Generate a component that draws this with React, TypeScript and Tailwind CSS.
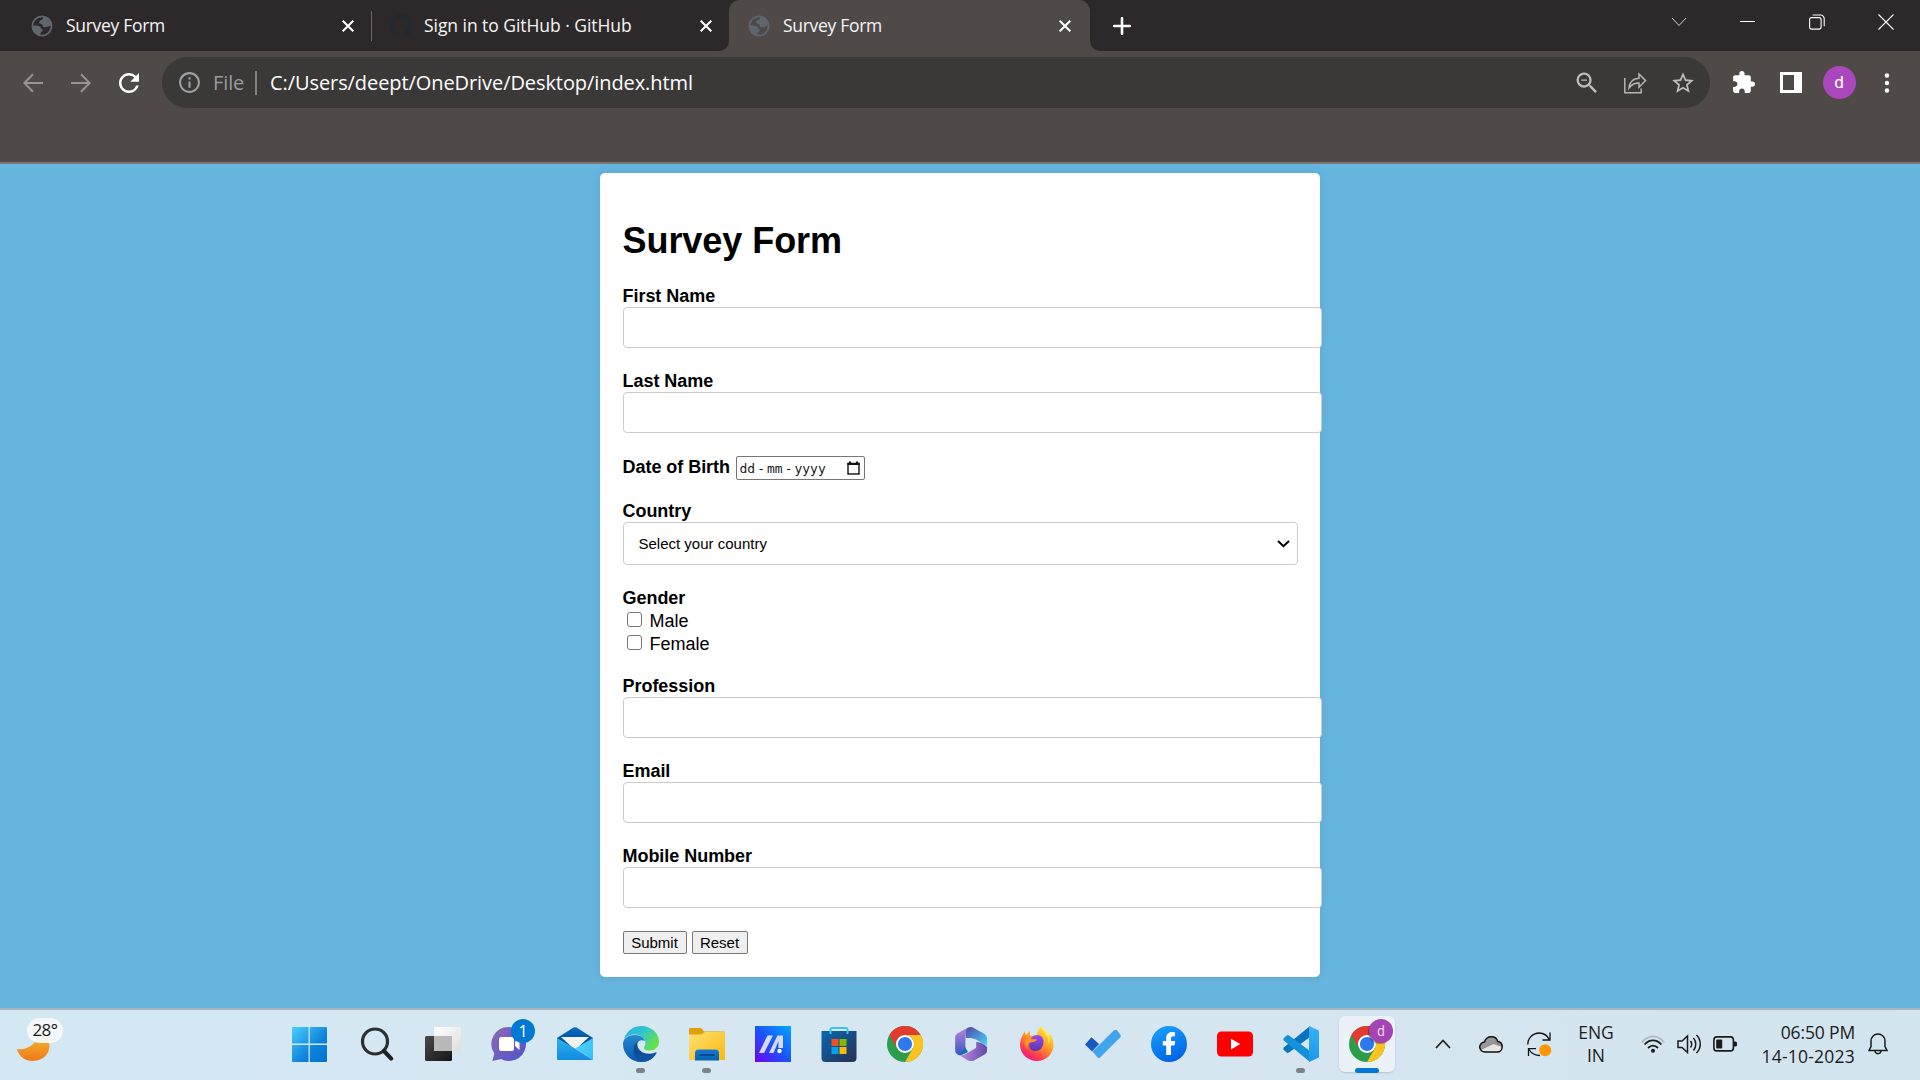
import type { ReactNode } from "react";
import { MdExtension, MdInfoOutline, MdRefresh, MdStarBorder, MdZoomOut } from "react-icons/md";
import { SiGithub } from "react-icons/si";

const UI = "font-['Segoe_UI','Open_Sans','Noto_Sans',sans-serif]";

function Globe() {
  return (
    <svg width="22" height="22" viewBox="0 0 22 22" fill="none">
      <circle cx="11" cy="11" r="9.6" stroke="#5f666d" strokeWidth="1.8" />
      <path
        d="M12.5 1.6C11 2.6 12.6 3.6 11.4 4.6 9.4 5.2 8 6.2 8.2 7.8c.3 1.5 2.6.8 3.1 1.8.4 1 .1 2.2 1.6 2.6 1.9.4 4.6-.6 6.6-1.4l1.1.2C20.800 5.800 17 1.600 12.500 1.600Z"
        fill="#5f666d"
      />
      <path
        d="M1.500 11c2.500-.6 5-.7 7 .2 1.500.8 1 2.300 2.600 3 1.300.8.2 2.200-.8 2.700-1.200.7-.4 2.300-1.500 3.100C4.500 19.200 1.500 15.500 1.500 11Z"
        fill="#5f666d"
      />
    </svg>
  );
}

function Close() {
  return (
    <svg width="12" height="12" viewBox="0 0 12 12" stroke="#fff" strokeWidth="2">
      <path d="M.7.7l10.600 10.600M11.300.7L.7 11.300" />
    </svg>
  );
}

function TabStrip() {
  return (
    <div className="flex h-[51px] bg-[#2d292a] text-[17.500px] text-[#f5f5f5]">
      <div className="flex h-[51px] w-[371px] items-center pl-[31px] pr-[17px]">
        <Globe />
        <span className="ml-[13px] flex-1 tracking-[-0.3px]">Survey Form</span>
        <Close />
      </div>
      <div className="mt-[11px] h-[30px] w-px bg-[#6b6566]" />
      <div className="flex h-[51px] w-[357px] items-center pl-[18px] pr-[17px]">
        <SiGithub size={23} color="#24292f" />
        <span className="ml-[11px] flex-1 tracking-[-0.05px]">Sign in to GitHub · GitHub</span>
        <Close />
      </div>
      <div className="relative flex h-[51px] w-[361px] items-center rounded-t-[11px] bg-[#4f4948] pl-[19px] pr-[19px]">
        <svg className="absolute -left-[10px] bottom-0" width="10" height="10">
          <path d="M10 0V10H0A10 10 0 0 0 10 0Z" fill="#4f4948" />
        </svg>
        <svg className="absolute -right-[10px] bottom-0" width="10" height="10">
          <path d="M0 0V10H10A10 10 0 0 1 0 0Z" fill="#4f4948" />
        </svg>
        <Globe />
        <span className="ml-[13px] flex-1 tracking-[-0.3px]">Survey Form</span>
        <Close />
      </div>
      <div className="flex h-[51px] w-[64px] items-center justify-center">
        <svg width="18" height="18" stroke="#fff" strokeWidth="2.600" strokeLinecap="round">
          <path d="M9 1.200V16.800M1.200 9H16.800" />
        </svg>
      </div>
      <div className="ml-auto flex h-[43px] items-center text-white">
        <div className="flex w-[68px] justify-center">
          <svg width="16" height="10" fill="none" stroke="#cfcece" strokeWidth="1">
            <path d="M1 1l7 7.500L15 1" />
          </svg>
        </div>
        <div className="flex w-[69px] justify-center">
          <div className="h-px w-[15px] bg-white" />
        </div>
        <div className="flex w-[69px] justify-center">
          <svg width="16" height="16" fill="none" stroke="currentColor" strokeWidth="1.100">
            <rect x=".6" y="3.600" width="11.500" height="11.500" rx="2" />
            <path d="M3.600 1h8a3.600 3.600 0 0 1 3.600 3.600v7.600" />
          </svg>
        </div>
        <div className="flex w-[69px] justify-center">
          <svg width="16" height="16" fill="none" stroke="currentColor" strokeWidth="1.100">
            <path d="M.5.5l15 15M15.500.5l-15 15" />
          </svg>
        </div>
      </div>
    </div>
  );
}

function Slot({ children }: { children: ReactNode }) {
  return <div className="flex w-12 items-center justify-center">{children}</div>;
}

function Toolbar() {
  return (
    <div className="flex h-[113px] border-b-2 border-[#7d7574] bg-[#4f4948] pt-[6px]">
      <div className="flex h-[51px] w-full items-center">
        <div className="flex pl-[9px]">
          <Slot>
            <svg width="20" height="20" fill="none" stroke="#989393" strokeWidth="2">
              <path d="M20 10H1.500M10 1.200L1.300 10l8.700 8.800" />
            </svg>
          </Slot>
          <Slot>
            <svg width="20" height="20" fill="none" stroke="#989393" strokeWidth="2">
              <path d="M0 10h18.500M10 1.200l8.700 8.800-8.700 8.800" />
            </svg>
          </Slot>
          <Slot>
            <MdRefresh size={30} color="#fff" />
          </Slot>
        </div>
        <div className="ml-[9px] flex h-[51px] w-[1548px] items-center rounded-full bg-[#3b3838] pl-[15px] pr-[3px]">
          <MdInfoOutline size={25} color="#9ba0a4" />
          <span className="ml-[11px] w-[42px] text-[20px] tracking-[-0.1px] text-[#989a9e]">File</span>
          <div className="h-6 w-[2px] bg-[#817f80]" />
          <span className="ml-[13px] flex-1 text-[20px] tracking-[-0.080px] text-white">
            C:/Users/deept/OneDrive/Desktop/index.html
          </span>
          <Slot>
            <MdZoomOut size={28} color="#bdbdbd" />
          </Slot>
          <Slot>
            <svg width="24" height="22" viewBox="0 0 24 22" fill="none" stroke="#b5b5b5" strokeWidth="1.500">
              <path d="M1.800 6v14.700h16.400v-4.200" />
              <path d="M6 16c.5-5.800 4-9.500 10-9.800V2l6.600 6.600-6.600 6.600v-4.200c-4.500-.1-7.400 1.500-10 5Z" />
            </svg>
          </Slot>
          <Slot>
            <MdStarBorder size={26} color="#bdbdbd" />
          </Slot>
        </div>
        <div className="ml-[9px] flex">
          <Slot>
            <MdExtension size={25} color="#fff" />
          </Slot>
          <Slot>
            <div className="flex h-[21px] w-[22px] justify-start bg-white py-[3px] pl-[3px]">
              <div className="h-[15px] w-[11px] bg-[#4f4948]" />
            </div>
          </Slot>
          <Slot>
            <div className="flex h-[33px] w-[33px] items-center justify-center rounded-full bg-[#ab47bc] font-[Roboto] text-[17px] text-white">
              d
            </div>
          </Slot>
          <Slot>
            <svg width="6" height="20" fill="#fff">
              <circle cx="3" cy="2.500" r="2.200" />
              <circle cx="3" cy="10" r="2.200" />
              <circle cx="3" cy="17.500" r="2.200" />
            </svg>
          </Slot>
        </div>
      </div>
    </div>
  );
}

function Label({ children }: { children: ReactNode }) {
  return <div className="h-[21px] text-[18px] font-bold leading-[20px] tracking-[-0.040px]">{children}</div>;
}

function Field({ label }: { label: string }) {
  return (
    <div className="mb-[23px]">
      <Label>{label}</Label>
      <input className="block h-[41px] w-[699px] rounded-[4px] border border-[#ccc] bg-white px-3" />
    </div>
  );
}

function Check({ label }: { label: string }) {
  return (
    <div className="flex h-[23px] pl-1">
      <div className="mt-[3px] h-[15px] w-[15px] rounded-[3px] border border-[#767676] bg-white" />
      <span className="ml-2 text-[18px] leading-[25px]">{label}</span>
    </div>
  );
}

function Page() {
  return (
    <div className="flex h-[844px] justify-center overflow-hidden bg-[#66b6e0] pt-[9px] font-['Liberation_Sans',Arial,sans-serif] text-black">
      <div className="h-[804px] w-[720px] rounded-[5px] bg-white pl-[22.500px] shadow-[0_0_11px_rgba(0,0,0,0.1)]">
        <h1 className="h-[113px] pt-[48px] text-[36px] font-bold leading-[40px] tracking-[-0.050px]">Survey Form</h1>
        <Field label="First Name" />
        <Field label="Last Name" />
        <div className="mb-[21px] flex h-6">
          <span className="w-[113px] text-[18px] font-bold leading-[23px] tracking-[-0.040px]">Date of Birth</span>
          <div className="flex h-6 w-[129px] items-center justify-between rounded-[2px] border border-[#767676] pl-[3px] pr-[4px]">
            <span className="flex gap-[3px] pt-px font-['DejaVu_Sans_Mono',monospace] text-[13px] text-[#1a1a1a]">
              <span>dd</span>
              <span className="-mx-px">-</span>
              <span>mm</span>
              <span className="-mx-px">-</span>
              <span>yyyy</span>
            </span>
            <svg width="13" height="14" fill="none" stroke="#111">
              <rect x="1" y="2.500" width="11" height="10.500" strokeWidth="1.400" />
              <path d="M.4 3h12.200M3 .4v2M10 .4v2" strokeWidth="2.200" />
            </svg>
          </div>
        </div>
        <Label>Country</Label>
        <div className="mb-[23px] flex h-[43px] w-[675px] items-center justify-between rounded-[4px] border border-[#ccc] pl-[15px] pr-[7px]">
          <span className="pt-[2px] text-[15px]">Select your country</span>
          <svg width="13" height="8" fill="none" stroke="#000" strokeWidth="2">
            <path d="M1 1l5.500 5.200L12 1" />
          </svg>
        </div>
        <Label>Gender</Label>
        <Check label="Male" />
        <Check label="Female" />
        <div className="h-[21px]" />
        <Field label="Profession" />
        <Field label="Email" />
        <Field label="Mobile Number" />
        <div className="flex gap-[5px] text-[15px]">
          <button className="h-[23px] w-16 rounded-[2px] border border-[#767676] bg-[#efefef] leading-[21px]">Submit</button>
          <button className="h-[23px] w-[56px] rounded-[2px] border border-[#767676] bg-[#efefef] leading-[21px]">Reset</button>
        </div>
      </div>
    </div>
  );
}

function Icon({ children }: { children: ReactNode }) {
  return (
    <svg width="36" height="36" viewBox="0 0 36 36" fill="none" className="overflow-visible">
      {children}
    </svg>
  );
}

function Cell({ children, running }: { children: ReactNode; running?: boolean }) {
  return (
    <div className="relative flex h-[68px] w-[66px] items-center justify-center">
      {children}
      {running && <div className="absolute left-[28px] top-[58px] h-[5px] w-[9px] rounded-full bg-[#7c8489]" />}
    </div>
  );
}

function ChromeLogo() {
  return (
    <Icon>
      <circle cx="18" cy="18" r="18" fill="#2c9e4b" />
      <path d="M2.400 9A18 18 0 0 1 33.600 9H18a9 9 0 0 0-7.800 13.500Z" fill="#e33b2e" />
      <path d="M33.600 9A18 18 0 0 1 18 36l7.800-13.500A9 9 0 0 0 18 9Z" fill="#fcc31e" />
      <circle cx="18" cy="18" r="9" fill="#fff" />
      <circle cx="18" cy="18" r="7.100" fill="#2f78ee" />
    </Icon>
  );
}

function Gradient({ id, from, to, x2 = 1, y2 = 1 }: { id: string; from: string; to: string; x2?: number; y2?: number }) {
  return (
    <linearGradient id={id} x1="0" y1="0" x2={x2} y2={y2}>
      <stop stopColor={from} />
      <stop offset="1" stopColor={to} />
    </linearGradient>
  );
}

function Gradients() {
  return (
    <svg width="0" height="0" className="absolute">
      <defs>
        <linearGradient id="win" gradientUnits="userSpaceOnUse" x1="0" y1="0" x2="36" y2="36">
          <stop stopColor="#4cd2ff" />
          <stop offset=".6" stopColor="#0f84dc" />
          <stop offset="1" stopColor="#0072d0" />
        </linearGradient>
        <Gradient id="moon" from="#f4c02f" to="#f07a1c" x2={0} />
        <Gradient id="dark" from="#4a4a4a" to="#151515" />
        <Gradient id="light" from="#ffffff" to="#dedede" />
        <Gradient id="chat" from="#9068b5" to="#4d55c8" />
        <Gradient id="mailTop" from="#0a6cc4" to="#03468f" x2={0} />
        <Gradient id="mail" from="#2cb2ee" to="#138be0" x2={0} />
        <Gradient id="mailFold" from="#50d6fa" to="#36bdf2" />
        <linearGradient id="edgeTop" x1="0" y1="0" x2="1" y2=".6">
          <stop stopColor="#2aaee8" />
          <stop offset=".5" stopColor="#30c5cf" />
          <stop offset="1" stopColor="#66e345" />
        </linearGradient>
        <Gradient id="edgeLeft" from="#2488cf" to="#0a58b0" x2={0} />
        <Gradient id="edgeDark" from="#114a8b" to="#0e56a8" />
        <Gradient id="folder" from="#ffe074" to="#fbb90d" />
        <Gradient id="folderBlue" from="#1579d2" to="#0763b0" x2={0} />
        <linearGradient id="asus" x1="0" y1="1" x2="1" y2="0">
          <stop stopColor="#6f00f6" />
          <stop offset=".5" stopColor="#1b55fa" />
          <stop offset="1" stopColor="#00a8ff" />
        </linearGradient>
        <Gradient id="store" from="#0868b4" to="#293052" />
        <Gradient id="m1" from="#5146a5" to="#46d5fb" />
        <Gradient id="m2" from="#bb83de" to="#3857c4" x2={0} />
        <Gradient id="m3" from="#c18ae8" to="#604ba5" x2={1} y2={0} />
        <linearGradient id="fox" x1=".8" y1="0" x2=".2" y2="1">
          <stop stopColor="#fff044" />
          <stop offset=".45" stopColor="#ff9a24" />
          <stop offset=".8" stopColor="#fb3359" />
          <stop offset="1" stopColor="#e01894" />
        </linearGradient>
        <Gradient id="foxBall" from="#9a4bf0" to="#5738a6" x2={0} />
        <Gradient id="fb" from="#17a6fa" to="#0565e8" x2={0.4} />
        <Gradient id="vs" from="#33b3f5" to="#1d98ea" x2={0} />
        <Gradient id="cloud" from="#a4a4a4" to="#828282" />
      </defs>
    </svg>
  );
}

function Apps() {
  return (
    <div className="ml-[215px] flex">
      <Cell>
        <svg width="40" height="36" viewBox="0 0 40 36">
          <path d="M1 2a1 1 0 0 1 1-1h15.500v16.500H1ZM18.800 1H35a1 1 0 0 1 1 1v15.500H18.800ZM1 19h16.500v17H2a1 1 0 0 1-1-1ZM18.800 19H36v16a1 1 0 0 1-1 1H18.800Z" fill="url(#win)" />
        </svg>
      </Cell>
      <Cell>
        <Icon>
          <circle cx="16" cy="15.500" r="12.500" stroke="#2d2e30" strokeWidth="3.200" />
          <path d="M25 25l7.200 7.600" stroke="#202122" strokeWidth="4.200" strokeLinecap="round" />
        </Icon>
      </Cell>
      <Cell>
        <Icon>
          <rect x="0" y="10" width="27" height="25" rx="1.500" fill="url(#dark)" />
          <rect x="9" y="1" width="27" height="24" rx="1.500" fill="url(#light)" />
          <path d="M9 10h18v15H9Z" fill="#b9b9b9" />
        </Icon>
      </Cell>
      <Cell>
        <Icon>
          <path d="M18 1a17 17 0 1 1-8 32L1.300 35l2-7.500A17 17 0 0 1 18 1Z" fill="url(#chat)" />
          <rect x="8" y="11" width="15" height="14" rx="2.500" fill="#fff" />
          <path d="M24 16l4.500-4v12L24 20Z" fill="#fff" />
          <circle cx="32" cy="5" r="12" fill="#0078d4" />
        </Icon>
        <span className="absolute left-[42px] top-[9px] w-[10px] text-center text-[16px] leading-[24px] text-white">1</span>
      </Cell>
      <Cell>
        <Icon>
          <path d="M0 12L16.500 1.600a3 3 0 0 1 3 0L36 12v8H0Z" fill="url(#mailTop)" />
          <path d="M4 11h28L18 24Z" fill="#f2f2f2" />
          <path d="M0 12l18 10.500L36 34H1a1 1 0 0 1-1-1Z" fill="url(#mail)" />
          <path d="M36 12v22L18 22.500Z" fill="url(#mailFold)" />
        </Icon>
      </Cell>
      <Cell running>
        <Icon>
          <path d="M1 13C4 4 11 0 18.500 0 28 0 36 7 36 15.500c0 6-4.500 9-9.500 9-4 0-5.500-1.500-5.500-2.800 0-1.200 1.500-2 1.500-4.700C22.500 12 17 8.500 12 8.500 7 8.500 3 10.500 1 13Z" fill="url(#edgeTop)" />
          <path d="M0 18C0 12 6 9 12 9c6 0 9 3 10 6-7-3-10 4-7 9 3.500 6 12 6 17.500 4C30 33 25 36 18 36 8 36 0 28 0 18Z" fill="url(#edgeLeft)" />
          <path d="M14.500 15.500C8 20 9 35 21 35.700c6-.8 10-4.200 12.500-8.500.3-.8-.3-1.200-1-.8C24 30 12.500 26 14.500 15.500Z" fill="url(#edgeDark)" />
        </Icon>
      </Cell>
      <Cell running>
        <Icon>
          <path d="M0 3a1 1 0 0 1 1-1h11l3 3.500h20a1 1 0 0 1 1 1V12H0Z" fill="#e0a009" />
          <path d="M0 8.500h12.500L16 6h19a1 1 0 0 1 1 1v27H0Z" fill="url(#folder)" />
          <path d="M6 34.500V27a3.500 3.500 0 0 1 3.500-3.500h17A3.500 3.500 0 0 1 30 27v7.500Z" fill="url(#folderBlue)" />
          <path d="M11 29h14" stroke="#044a87" strokeWidth="1.800" strokeLinecap="round" />
        </Icon>
      </Cell>
      <Cell>
        <Icon>
          <path d="M0 0h36v36H0Z" fill="url(#asus)" />
          <path d="M4 27L12.500 9.500h5.500L9 27ZM14 27L22.500 9.500H28V22h-4.500v-7L18.500 27Z" fill="#d5dcff" />
          <circle cx="24.500" cy="25" r="2.200" fill="#fff" />
        </Icon>
      </Cell>
      <Cell>
        <Icon>
          <path d="M.5 5h35v27a4 4 0 0 1-4 4h-27a4 4 0 0 1-4-4Z" fill="url(#store)" />
          <path d="M9.500 8V3.500a1.500 1.500 0 0 1 1.500-1.500h14a1.500 1.500 0 0 1 1.500 1.500V8" stroke="#3cc3f4" strokeWidth="2" />
          <path d="M10.500 13h7v7h-7Z" fill="#f25022" />
          <path d="M18.500 13h7v7h-7Z" fill="#7fba00" />
          <path d="M10.500 21h7v7h-7Z" fill="#00a4ef" />
          <path d="M18.500 21h7v7h-7Z" fill="#ffb900" />
        </Icon>
      </Cell>
      <Cell>
        <ChromeLogo />
      </Cell>
      <Cell>
        <Icon>
          <path d="M14 2L4 7.800Q2.200 9 2.200 11v14q0 2 1.800 3l3 1.600Q12 28 12.500 24V12Q12.500 5 18 1Z" fill="url(#m2)" />
          <path d="M13 12V6q0-5 6-5l12.500 7q2.500 1.500 2.500 4v8L23 13.500 18 12Z" fill="url(#m1)" />
          <path d="M34 17v8q0 2-2 3.200L21 34.500q-3 1-6 0L6 29q4 1 7-1.200L23 22V16Q29 16 34 21Z" fill="url(#m3)" />
          <path d="M4 28.500Q9 30 15 26l-3-5Q10 26 4 28.500Z" fill="#1770b8" />
          <path d="M18 12l5.200 3v6L18 24.300 12.800 21v-6Z" fill="#d7e7f1" />
        </Icon>
      </Cell>
      <Cell>
        <Icon>
          <path d="M1 19C1 13 3.500 9.500 5.500 5.500L7 9l4-4v5l7-1C18 5 20 2 23 0c1 5 4 5 7 10l1-2c2 3 3.500 7 3.500 11C34.500 28 27 35 18 35S1 28 1 19Z" fill="url(#fox)" />
          <path d="M18 9c5 0 7 4 6.500 8-.5 5-4 8-8.500 8-4 0-6-3-6-7 0-5 4-9 8-9Z" fill="url(#foxBall)" />
          <path d="M6 13c5-1.500 7 .5 12 .3-.5 3-5 2-8 4-2 1.500-2 4-1 6-3-2-4-6-3-10.300Z" fill="#ff9421" />
          <path d="M22 2c3 5 8 7 7 15 2-1 2-4 1.500-7C29 6 25 5 23 0Z" fill="#ffee45" />
        </Icon>
      </Cell>
      <Cell>
        <Icon>
          <path d="M0 18.500l6.500-7.300L14 18l-7 7.500Z" fill="#185abd" />
          <path d="M7.500 25.500L29 4.300q1.500-1.200 3 0l3.400 4.400q1 1.300 0 2.600L15 31.500q-1.200 1-2.400 0Z" fill="#41a5ee" />
        </Icon>
      </Cell>
      <Cell>
        <Icon>
          <circle cx="18" cy="18" r="18" fill="url(#fb)" />
          <path d="M15.200 29V19.500H11.800V15h3.400v-2.800C15.200 8.300 17.300 6 21 6c1.300 0 3 .3 3 .3v3.900h-1.800c-1.700 0-2.200 1-2.200 2.100V15h4.200l-.7 4.500H20V29Z" fill="#fff" />
        </Icon>
      </Cell>
      <Cell>
        <Icon>
          <rect x="0" y="5.500" width="36" height="25" rx="4.500" fill="#f00" />
          <path d="M14 12.800v10.600l9.300-5.300Z" fill="#fff" />
        </Icon>
      </Cell>
      <Cell running>
        <Icon>
          <path d="M27 0v11L6 26.500q-1.200.8-2.400 0L.8 24q-1.200-1.200 0-2.400Z" fill="#0b72bd" />
          <path d="M27 36V25L6 9.500q-1.200-.8-2.400 0L.8 12q-1.200 1.200 0 2.400Z" fill="#1391db" />
          <path d="M26 0l9 4q1 .6 1 1.800v24.400q0 1.200-1 1.800l-9 4Z" fill="url(#vs)" />
        </Icon>
      </Cell>
      <Cell>
        <div className="absolute left-[5px] top-[6px] h-[56px] w-[56px] rounded-[6px] bg-[#eaf2f8] shadow-[0_1px_2px_rgba(0,0,0,0.15)]" />
        <div className="relative">
          <ChromeLogo />
        </div>
        <div className="absolute left-[35px] top-[9px] h-6 w-6 rounded-full bg-[#a343b4] text-center font-[Roboto] text-[14px] leading-[24px] text-[#ecd0f0] shadow-[-1px_1px_1px_rgba(0,0,0,0.35)]">
          d
        </div>
        <div className="absolute left-[21px] top-[58px] h-[5px] w-6 rounded-full bg-[#0078d4]" />
      </Cell>
    </div>
  );
}

function Tray() {
  return (
    <div className="flex h-[68px] flex-1 items-center text-[#1b1b1b]">
      <svg className="ml-[35px]" width="16" height="10" fill="none" stroke="#222" strokeWidth="1.800">
        <path d="M1 9l7-7.500L15 9" />
      </svg>
      <svg className="ml-[28px]" width="24" height="17" viewBox="0 0 24 17">
        <path d="M6 16a5 5 0 0 1-.5-10C6.500 2.500 9.500.8 12.500.8c3 0 5.500 2 6.200 4.600 2.700.3 4.500 2.500 4.500 5 0 3.200-2 5.600-5 5.600Z" fill="url(#cloud)" />
        <path d="M2 14L14.500 8l8.500 3c0 3-2 5-4.800 5H6C4 16 3 15.500 2 14Z" fill="#e6e6e6" />
        <path d="M6 16a5 5 0 0 1-.5-10C6.500 2.500 9.500.8 12.500.8c3 0 5.500 2 6.200 4.600 2.700.3 4.500 2.500 4.500 5 0 3.200-2 5.600-5 5.600Z" fill="none" stroke="#111" strokeWidth="1.500" />
      </svg>
      <svg className="ml-[24px]" width="25" height="25" fill="none" stroke="#151515" strokeWidth="1.300">
        <path d="M.8 12.500C.8 6 6 1 12 1c4.500 0 8.500 2.500 10.500 7M23 .5V8h-7.500M1.500 24v-7.300H9M2 17.500c2.500 4 6 6 11 6" />
        <circle cx="18.200" cy="18.300" r="6" fill="#ff9800" stroke="none" />
      </svg>
      <div className="ml-[23px] w-[42px] text-center text-[17.500px] leading-[23px]">
        ENG
        <br />
        IN
      </div>
      <svg className="ml-[24px]" width="24" height="18" fill="none" strokeWidth="1.800">
        <path d="M.8 7.500C7 -.8 17-.8 23.200 7.500" stroke="#a9b7c0" />
        <path d="M3.600 9.500c4.700-5.500 12-5.500 16.800 0M7 13c3-3 7-3 10 0" stroke="#1b1b1b" />
        <circle cx="12" cy="15.800" r="2" fill="#1b1b1b" />
      </svg>
      <svg className="ml-[12px]" width="25" height="20" fill="none" stroke="#1b1b1b" strokeWidth="1.500">
        <path d="M1 7v6.500h4l5.500 5V2L5 7ZM13.500 7c1.500 2 1.500 4.500 0 6.500M16.500 4c3 3.500 3 9 0 12.500M19.500 1c5 5 5 13 0 18" />
      </svg>
      <svg className="ml-[11px]" width="24" height="16" fill="none">
        <rect x=".9" y=".9" width="19.500" height="14" rx="3" stroke="#1b1b1b" strokeWidth="1.600" />
        <rect x="3.200" y="3.400" width="6" height="9" rx="1" fill="#1b1b1b" />
        <path d="M21 5.500h1.500a1.500 1.500 0 0 1 1.500 1.500v2a1.500 1.500 0 0 1-1.500 1.500H21Z" fill="#1b1b1b" />
      </svg>
      <div className="ml-auto text-right text-[17.500px] leading-[24px]">
        <span className="tracking-[-0.150px]">06:50 PM</span>
        <br />
        <span className="tracking-[0.220px]">14-10-2023</span>
      </div>
      <svg className="ml-[13px] mr-[32px]" width="20" height="22" fill="none" stroke="#1b1b1b" strokeWidth="1.500">
        <path d="M1 17.500l2-4V8a7 7 0 0 1 14 0v5.500l2 4ZM7 18c.5 3.500 5.500 3.500 6 0" />
      </svg>
    </div>
  );
}

function Taskbar() {
  return (
    <div className="flex h-[72px] border-t-2 border-[#a9b5be] bg-linear-to-r from-[#d3e8f3] via-[#d7e7f1] to-[#d2e4ee]">
      <Gradients />
      <div className="relative h-[68px] w-[63px]">
        <svg className="absolute left-[16px] top-[20px]" width="35" height="32">
          <path d="M.7 19C11 21 21 14 24.500 1.500 38 7 37 31 16.500 31 9 31 3.500 27 .7 19Z" fill="url(#moon)" />
        </svg>
        <div className="absolute left-[27px] top-[8px] h-[25px] w-9 rounded-full bg-[#f5f9fb]/95 text-center text-[17px] leading-[24px] tracking-[-0.5px] text-[#1b1b1b]">
          28°
        </div>
      </div>
      <Apps />
      <Tray />
    </div>
  );
}

export default function App() {
  return (
    <div className={`flex h-[1080px] w-[1920px] flex-col overflow-hidden ${UI}`}>
      <TabStrip />
      <Toolbar />
      <Page />
      <Taskbar />
    </div>
  );
}
